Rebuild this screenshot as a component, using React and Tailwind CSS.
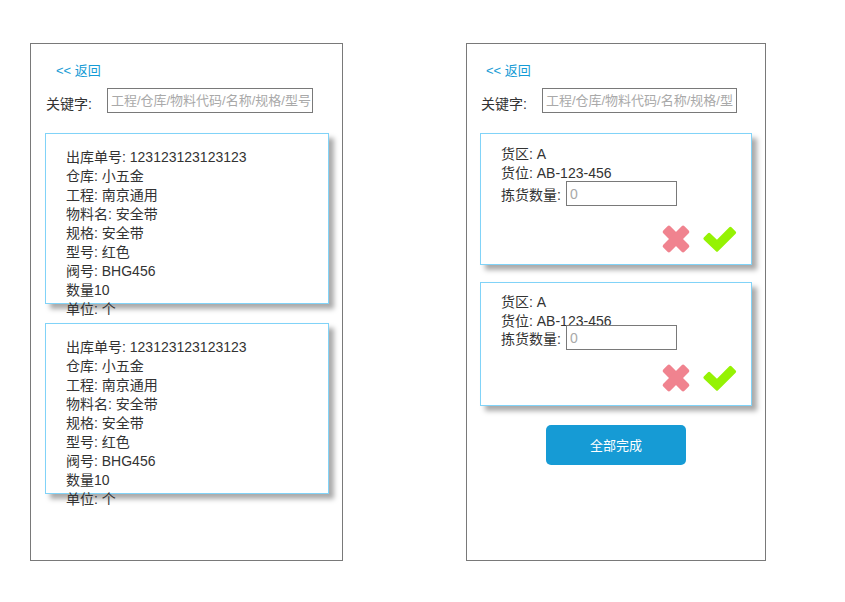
import React from "react";

const font = "font-['Liberation_Sans','Noto_Sans_CJK_SC',sans-serif]";

function CrossIcon() {
  return (
    <svg width="30" height="30" viewBox="0 0 30 30" className="shrink-0" fill="#f0838f">
      <rect x="0" y="10" width="30" height="10" rx="2" transform="rotate(45 15 15)" />
      <rect x="0" y="10" width="30" height="10" rx="2" transform="rotate(-45 15 15)" />
    </svg>
  );
}

function CheckIcon() {
  return (
    <svg width="36" height="30" viewBox="0 0 36 30" className="shrink-0">
      <polygon
        points="7.1,10.4 15,17.8 28.4,4.4 32.6,8.6 15,26.2 2.9,14.6"
        fill="#95f204"
        stroke="#95f204"
        strokeWidth="3"
        strokeLinejoin="round"
      />
    </svg>
  );
}

function OrderCard() {
  const rows = ["出库单号: 123123123123123", "仓库: 小五金", "工程: 南京通用", "物料名: 安全带", "规格: 安全带", "型号: 红色", "阀号: BHG456", "数量10", "单位: 个"];
  return (
    <div className="w-[284px] h-[171px] box-border border border-[#81d3f8] bg-white shadow-[5px_5px_5px_#aaaaaa] pl-5 pt-[14px]">
      {rows.map((r) => (
        <div key={r} className="h-[19px] leading-[19px] text-sm text-[#333333]">{r}</div>
      ))}
    </div>
  );
}

function PickCard({ box, rowMargin, footMargin }) {
  return (
    <div className={`w-[272px] box-border border border-[#81d3f8] bg-white shadow-[5px_5px_5px_#aaaaaa] pl-5 ${box}`}>
      <div className="h-[19px] leading-[19px] text-sm text-[#333333]">货区: A</div>
      <div className="h-[19px] leading-[19px] text-sm text-[#333333]">货位: AB-123-456</div>
      <div className={`flex items-start ${rowMargin}`}>
        <span className="text-sm text-[#333333] leading-[19px] mt-[5px] w-[65px] shrink-0">拣货数量:</span>
        <input readOnly placeholder="0" className="w-[111px] h-[25px] box-border border border-[#797979] bg-transparent pl-[3px] text-sm outline-none placeholder:text-[#a9a9a9]" />
      </div>
      <div className={`flex justify-end items-center gap-[11px] pr-[13px] ${footMargin}`}>
        <CrossIcon />
        <CheckIcon />
      </div>
    </div>
  );
}

function Search({ gap, inputW }) {
  return (
    <div className={`flex items-start ${gap}`}>
      <span className="text-sm leading-[17px] mt-[8px] text-[#333333]">关键字:</span>
      <input readOnly placeholder="工程/仓库/物料代码/名称/规格/型号" className={`h-[25px] box-border border border-[#797979] bg-white pl-[3px] text-[13px] outline-none placeholder:text-[#a9a9a9] ${inputW}`} />
    </div>
  );
}

export default function App() {
  return (
    <div className={`flex w-[845px] h-[602px] bg-white pt-[43px] pl-[30px] gap-[123px] overflow-hidden ${font}`}>
      <section className="w-[313px] h-[518px] box-border border border-[#797979] pl-[14px] pt-[18px]">
        <a className="block ml-[11px] h-[18px] leading-[18px] text-[13px] text-[#169bd5]">&lt;&lt; 返回</a>
        <div className="mt-[8px] pl-px">
          <Search gap="gap-[15px]" inputW="w-[206px] pr-px" />
        </div>
        <div className="mt-[20px] flex flex-col gap-[19px]">
          <OrderCard />
          <OrderCard />
        </div>
      </section>
      <section className="w-[300px] h-[518px] box-border border border-[#797979] pl-[13px] pt-[18px]">
        <a className="block ml-[6px] h-[18px] leading-[18px] text-[13px] text-[#169bd5]">&lt;&lt; 返回</a>
        <div className="mt-[8px] pl-px">
          <Search gap="gap-[15px]" inputW="w-[195px] pr-[3px]" />
        </div>
        <div className="mt-[20px] flex flex-col gap-[17px]">
          <PickCard box="h-[132px] pt-[11px]" rowMargin="mt-[-2px]" footMargin="mt-[18px]" />
          <PickCard box="h-[124px] pt-[10px]" rowMargin="mt-[-6px]" footMargin="mt-[13px]" />
        </div>
        <button className="block mt-[19px] ml-[66px] w-[140px] h-[40px] rounded-[5px] bg-[#169bd5] text-white text-[13px] pt-px">全部完成</button>
      </section>
    </div>
  );
}
